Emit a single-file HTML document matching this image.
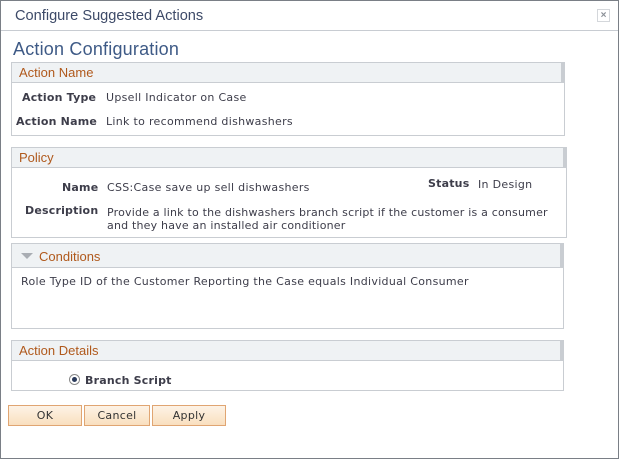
<!DOCTYPE html>
<html><head><style>
*{margin:0;padding:0;box-sizing:border-box}
body{width:619px;height:459px;background:#fff;position:relative;overflow:hidden;font-family:"DejaVu Sans",Verdana,sans-serif;font-size:11px;letter-spacing:0.3px;color:#3d3d4a}
.frame{position:absolute;left:0;top:0;width:619px;height:459px;border:1px solid #7a7f86}
.title{position:absolute;left:15px;top:8px;font-family:"Liberation Sans",Arial,sans-serif;font-size:14.6px;letter-spacing:0;color:#3d4a68}
.tline{position:absolute;left:1px;right:1px;top:30px;height:1px;background:#c8ccd2}
.close{position:absolute;left:597px;top:9px;width:13px;height:13px;border:1px solid #d4d7db;color:#8a8f96;font-size:10px;line-height:11px;text-align:center;font-family:"Liberation Sans",sans-serif;font-weight:bold;letter-spacing:0}
h1{position:absolute;left:13px;top:39px;font-family:"Liberation Sans",Arial,sans-serif;font-weight:normal;font-size:18px;letter-spacing:0.2px;color:#3e5a86}
.box{position:absolute;border:1px solid #c9cdd2;background:#fff}
.hd{height:20px;background:#eff2f4;border-bottom:1px solid #c9cdd2;border-right:3px solid #c9cdd2;color:#b0591c;font-family:"Liberation Sans",Arial,sans-serif;font-size:13px;letter-spacing:0;padding:2px 0 0 7px}
.t{position:absolute;white-space:nowrap}
.b{font-weight:bold;color:#3d3d4a;letter-spacing:0.2px}
.btn{position:absolute;top:405px;height:21px;border:1px solid #e0a572;background:linear-gradient(#fdf3e6,#f9dfbf);font-size:11px;text-align:center;line-height:19px;color:#333}
</style></head><body>
<div class="frame"></div>
<div class="title">Configure Suggested Actions</div>
<div class="close">×</div>
<div class="tline"></div>
<h1>Action Configuration</h1>

<div class="box" style="left:11px;top:62px;width:554px;height:74px"><div class="hd">Action Name</div></div>
<div class="t b" style="left:22px;top:91px">Action Type</div>
<div class="t" style="left:106px;top:91px">Upsell Indicator on Case</div>
<div class="t b" style="left:16px;top:115px">Action Name</div>
<div class="t" style="left:106px;top:115px">Link to recommend dishwashers</div>

<div class="box" style="left:11px;top:147px;width:556px;height:91px"><div class="hd">Policy</div></div>
<div class="t b" style="left:62px;top:181px">Name</div>
<div class="t" style="left:107px;top:181px">CSS:Case save up sell dishwashers</div>
<div class="t b" style="left:428px;top:177px">Status</div>
<div class="t" style="left:478px;top:178px">In Design</div>
<div class="t b" style="left:25px;top:204px">Description</div>
<div class="t" style="left:107px;top:206px;line-height:13px;letter-spacing:0.2px">Provide a link to the dishwashers branch script if the customer is a consumer<br>and they have an installed air conditioner</div>

<div class="box" style="left:11px;top:243px;width:553px;height:86px"><div class="hd" style="height:24px;padding:5px 0 0 27px;position:relative">Conditions<span style="position:absolute;left:9px;top:9px;width:0;height:0;border-left:6px solid transparent;border-right:6px solid transparent;border-top:6px solid #a9adb3"></span></div></div>
<div class="t" style="left:21px;top:275px">Role Type ID of the Customer Reporting the Case equals Individual Consumer</div>

<div class="box" style="left:11px;top:340px;width:553px;height:51px"><div class="hd">Action Details</div></div>
<div style="position:absolute;left:69px;top:374px;width:11px;height:11px;border-radius:50%;border:1px solid #888;background:#fff"><div style="position:absolute;left:2px;top:2px;width:5px;height:5px;border-radius:50%;background:#2a3a5a"></div></div>
<div class="t b" style="left:85px;top:374px">Branch Script</div>

<div class="btn" style="left:8px;width:74px">OK</div>
<div class="btn" style="left:84px;width:66px">Cancel</div>
<div class="btn" style="left:152px;width:74px">Apply</div>
</body></html>
